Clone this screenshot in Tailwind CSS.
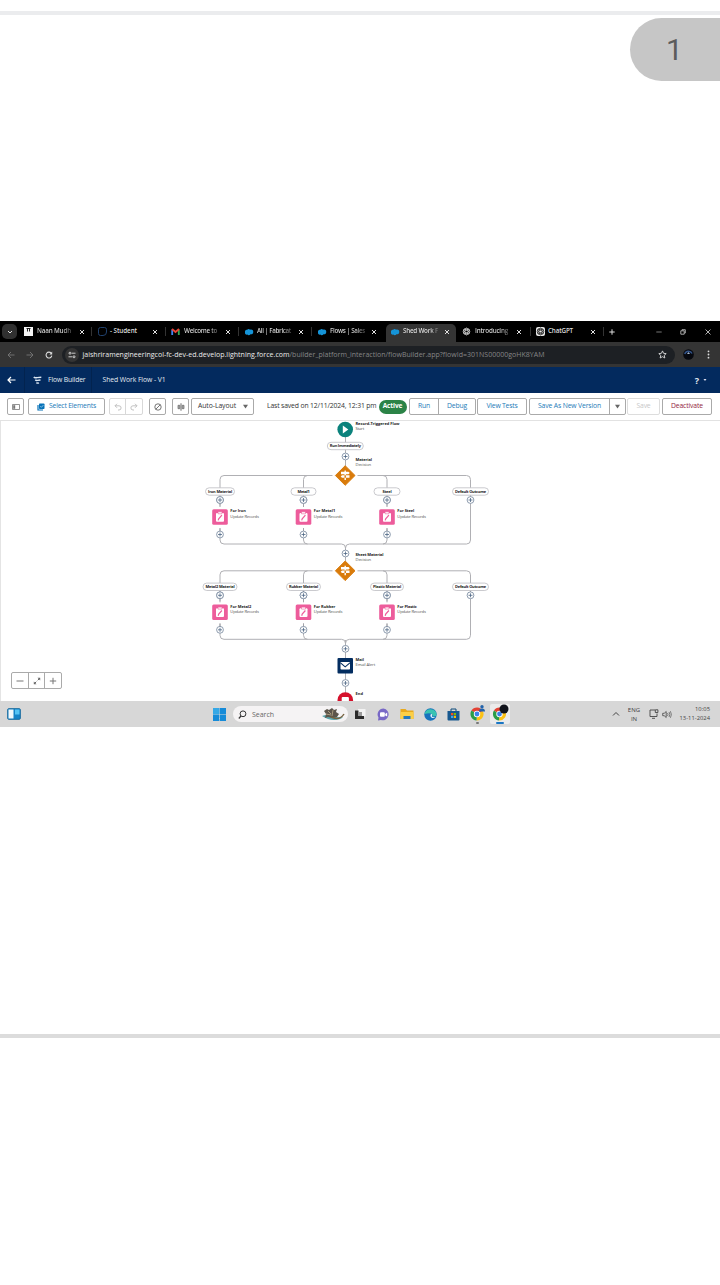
<!DOCTYPE html>
<html lang="en">
<head>
<meta charset="utf-8">
<title>Flow Builder</title>
<script src="https://cdn.jsdelivr.net/npm/@tailwindcss/browser@4"></script>
</head>
<body class="bg-white">
<svg width="0" height="0" class="absolute">
  <defs>
    <symbol id="cloud" viewBox="0 0 10 8"><path fill="#1594d8" d="M1 4.200C.6 2.600 2 1.400 3.200 1.800 4 .8 5.400.900 6 1.700 8 1 9.700 2.500 9.200 4.400 9 6 7.400 6.500 6.500 6.200 5.600 7.500 4 7.400 3.400 6.600 1.800 6.900.7 5.700 1 4.200Z"/></symbol>
    <symbol id="x" viewBox="0 0 6 6"><path stroke="#e0e0e0" stroke-width="1" d="M1 1l4 4M5 1l-4 4"/></symbol>
    <symbol id="gpt" viewBox="0 0 10 10"><g fill="none" stroke="currentColor" stroke-width=".8"><circle cx="5" cy="5" r="3.700"/><ellipse cx="5" cy="5" rx="1.600" ry="3.700"/><ellipse cx="5" cy="5" rx="1.600" ry="3.700" transform="rotate(60 5 5)"/><ellipse cx="5" cy="5" rx="1.600" ry="3.700" transform="rotate(120 5 5)"/></g></symbol>
    <symbol id="chrome" viewBox="0 0 14 14"><path d="M7 7L1.400 3.600A6.500 6.500 0 0 1 12.800 4Z" fill="#e34133"/><path d="M7 7L12.800 4A6.500 6.500 0 0 1 6.500 13.500Z" fill="#fbc116"/><path d="M7 7L6.500 13.500A6.500 6.500 0 0 1 1.400 3.600Z" fill="#2a9d48"/><circle cx="7" cy="7" r="3.200" fill="#fff"/><circle cx="7" cy="7" r="2.400" fill="#3b82e8"/></symbol>
  </defs>
</svg>
<div class="relative flex h-[1285px] w-[720px] flex-col overflow-hidden bg-white font-['Open_Sans','Noto_Sans',sans-serif] leading-none whitespace-nowrap">
  <div class="mt-[11px] h-1 shrink-0 bg-[#ebecee]"></div>
  <div class="mt-[3px] ml-auto flex h-[63px] w-[90px] shrink-0 items-center rounded-l-full bg-[#c6c6c6] pl-[36px] font-[Roboto,sans-serif] text-[30px] text-[#5c5c5c]">1</div>

  <main id="screen" class="mt-[240px] flex h-[406px] shrink-0 flex-col text-[6.500px]">
    <!-- browser tabs -->
    <div class="flex h-[21px] items-center bg-black text-[6.300px] font-semibold text-[#dedede]">
      <div class="ml-[2px] flex h-[15px] w-[15px] items-center justify-center rounded-[5px] bg-[#303030]"><svg class="h-1.5 w-1.5" viewBox="0 0 6 6"><path d="M1 2l2 2 2-2" fill="none" stroke="#ddd"/></svg></div>
      <div class="ml-[2px] flex h-full w-[73px] items-center pl-[5px]"><svg class="h-[9px] w-[9px]" viewBox="0 0 9 9"><path fill="#f5f5f5" d="M0 0h9v9H0z"/><path d="M2.500 1.500h4M3.500 1.500v3M5.500 1.500v3" stroke="#222"/></svg><span class="ml-1 w-[36px] overflow-hidden bg-gradient-to-r from-[#dedede] from-70% to-[#333] bg-clip-text py-1 text-transparent"><span data-w="34">Naan Mudh</span></span><svg class="ml-[6px] h-1.5 w-1.5"><use href="#x"/></svg></div>
      <div class="flex h-full w-[73px] items-center pl-[5px]"><i class="-ml-[1px] mr-[1px] h-[9px] w-px -translate-x-[5px] bg-[#333]"></i><svg class="h-[9px] w-[9px]" viewBox="0 0 9 9"><path d="M2.500.5h4a2 2 0 0 1 2 2v2.500a3.500 3.500 0 0 1-3.500 3.500H2.500a2 2 0 0 1-2-2v-4a2 2 0 0 1 2-2z" fill="#000" stroke="#20416e"/></svg><span class="ml-[3px] w-[37px] py-1"><span data-w="27">- Student</span></span><svg class="ml-[5px] h-1.5 w-1.5"><use href="#x"/></svg></div>
      <div class="flex h-full w-[73px] items-center pl-[5px]"><i class="-ml-[1px] h-[9px] w-px -translate-x-[4px] bg-[#333]"></i><svg class="ml-[1px] h-[9px] w-[9px]" viewBox="0 0 9 9"><path d="M1.200 8V2.500" stroke="#4285f4" stroke-width="1.800"/><path d="M7.800 8V2.500" stroke="#34a853" stroke-width="1.800"/><path d="M1 2l3.500 3L8 2" stroke="#ea4335" stroke-width="1.900" fill="none"/></svg><span class="ml-[4px] w-[36px] overflow-hidden bg-gradient-to-r from-[#dedede] from-70% to-[#333] bg-clip-text py-1 text-transparent"><span data-w="33">Welcome to</span></span><svg class="ml-[5px] h-1.5 w-1.5"><use href="#x"/></svg></div>
      <div class="flex h-full w-[73px] items-center pl-[5px]"><i class="-ml-[1px] h-[9px] w-px -translate-x-[4px] bg-[#333]"></i><svg class="ml-[1px] h-[8px] w-[10px]"><use href="#cloud"/></svg><span class="ml-[3px] w-[36px] overflow-hidden bg-gradient-to-r from-[#dedede] from-70% to-[#333] bg-clip-text py-1 text-transparent"><span data-w="34">All | Fabricat</span></span><svg class="ml-[5px] h-1.5 w-1.5"><use href="#x"/></svg></div>
      <div class="flex h-full w-[73px] items-center pl-[5px]"><i class="-ml-[1px] h-[9px] w-px -translate-x-[4px] bg-[#333]"></i><svg class="ml-[1px] h-[8px] w-[10px]"><use href="#cloud"/></svg><span class="ml-[3px] w-[36px] overflow-hidden bg-gradient-to-r from-[#dedede] from-70% to-[#333] bg-clip-text py-1 text-transparent"><span data-w="35">Flows | Sales</span></span><svg class="ml-[5px] h-1.5 w-1.5"><use href="#x"/></svg></div>
      <div class="ml-[2px] mt-[3px] flex h-[18px] w-[70px] items-center rounded-t-[5px] bg-[#343434] pb-[3px] pl-[4px]"><svg class="h-[8px] w-[10px]"><use href="#cloud"/></svg><span class="ml-[3px] w-[36px] overflow-hidden bg-gradient-to-r from-[#e8e8e8] from-75% to-[#555] bg-clip-text py-1 text-transparent"><span data-w="35">Shed Work F</span></span><svg class="ml-[5px] h-1.5 w-1.5"><use href="#x"/></svg></div>
      <div class="ml-px flex h-full w-[73px] items-center pl-[5px]"><svg class="h-[9px] w-[9px] text-[#ccc]"><use href="#gpt"/></svg><span class="ml-[4px] w-[36px] overflow-hidden bg-gradient-to-r from-[#dedede] from-70% to-[#333] bg-clip-text py-1 text-transparent"><span data-w="33">Introducing</span></span><svg class="ml-[5px] h-1.5 w-1.5"><use href="#x"/></svg></div>
      <div class="flex h-full w-[73px] items-center pl-[5px]"><i class="-ml-[1px] h-[9px] w-px -translate-x-[4px] bg-[#333]"></i><svg class="ml-[1px] h-[9px] w-[9px] rounded-[2px] bg-[#e8e8e8] text-[#333]"><use href="#gpt"/></svg><span class="ml-[3px] w-[37px] py-1"><span data-w="25">ChatGPT</span></span><svg class="ml-[5px] h-1.5 w-1.5"><use href="#x"/></svg></div>
      <i class="h-[9px] w-px bg-[#333]"></i>
      <svg class="ml-[5px] h-[6px] w-[6px]" viewBox="0 0 6 6"><path d="M3 .3v5.400M.3 3h5.400" stroke="#ddd"/></svg>
      <svg class="ml-[41px] h-[6px] w-[6px]" viewBox="0 0 6 6"><path d="M.3 3h5.400" stroke="#aaa" stroke-width=".7"/></svg>
      <svg class="ml-[18px] h-[6px] w-[6px]" viewBox="0 0 6 6"><path d="M.8 1.800h3.400v3.400H.8zM2 1.500V.7h3.300V4H4.400" fill="none" stroke="#ccc" stroke-width=".8"/></svg>
      <svg class="ml-[19px] h-[6px] w-[6px]" viewBox="0 0 6 6"><path d="M.5.500l5 5M5.500.500l-5 5" stroke="#ddd" stroke-width=".8"/></svg>
    </div>
    <!-- address bar -->
    <div class="flex h-[25px] items-center bg-[#343434]">
      <svg class="ml-[7px] h-2 w-2" viewBox="0 0 8 8"><path d="M7.500 4H1M4 1L1 4l3 3" fill="none" stroke="#777" stroke-width=".9"/></svg>
      <svg class="ml-[11px] h-2 w-2" viewBox="0 0 8 8"><path d="M.5 4H7M4 1l3 3-3 3" fill="none" stroke="#777" stroke-width=".9"/></svg>
      <svg class="ml-[10.500px] h-2 w-2" viewBox="0 0 8 8"><path d="M6.800 4.700A2.900 2.900 0 1 1 6.200 2.200" fill="none" stroke="#ddd" stroke-width="1.100"/><path d="M7.200.5v3H4.400z" fill="#ddd"/></svg>
      <div class="ml-[9px] flex h-[18px] w-[613px] items-center rounded-full bg-[#1d2024] pl-[3px]">
        <div class="flex h-[14px] w-[14px] items-center justify-center rounded-full bg-[#343434]"><svg class="h-2 w-2" viewBox="0 0 8 8"><g fill="none" stroke="#ddd" stroke-width=".9"><circle cx="2" cy="2.200" r="1"/><path d="M3.800 2.200H7.500M.5 5.800H4.200"/><circle cx="6" cy="5.800" r="1"/></g></svg></div>
        <span class="ml-[4px] text-[7px] font-medium text-[#ececec]" data-w="207">jaishriramengineeringcol-fc-dev-ed.develop.lightning.force.com</span><span class="text-[7px] text-[#868686]" data-w="255">/builder_platform_interaction/flowBuilder.app?flowId=301NS00000goHK8YAM</span>
        <svg class="ml-auto mr-[8px] h-[9px] w-[9px]" viewBox="0 0 10 10"><path d="M5 1l1.200 2.700 2.900.3-2.200 2 .7 2.900L5 7.400 2.400 8.900l.7-2.900L.9 4l2.900-.3z" fill="none" stroke="#ddd"/></svg>
      </div>
      <svg class="ml-[8px] h-[11px] w-[11px]" viewBox="0 0 11 11"><circle cx="5.500" cy="5.500" r="5.300" fill="#06080f"/><path d="M1.800 5A3.800 3.800 0 0 1 9 4.500" fill="none" stroke="#315389" stroke-width="1.500"/><path d="M4 5l1.500-2L7 5z" fill="#a7b8cc"/></svg>
      <svg class="ml-[13px] h-[9px] w-[3px]" viewBox="0 0 3 9"><g fill="#ddd"><circle cx="1.500" cy="1.300" r=".9"/><circle cx="1.500" cy="4.500" r=".9"/><circle cx="1.500" cy="7.700" r=".9"/></g></svg>
    </div>
    <!-- builder header -->
    <header class="flex h-[26px] items-center bg-[#032a5e] text-[6.800px] font-medium text-[#e4eaf2]">
      <div class="flex h-full w-[25px] items-center border-r border-[#02234f] pl-[7px]"><svg class="h-2 w-[9px]" viewBox="0 0 9 8"><path d="M8.500 4H1.200M4 1L1 4l3 3" fill="none" stroke="#fff" stroke-width="1.200"/></svg></div>
      <div class="flex h-full w-[67px] items-center border-r border-[#02234f] pl-[8px]"><svg class="h-[9px] w-[9px]" viewBox="0 0 9 9"><path d="M.8 1Q1.500 2 3 1.700L8.300 1.200M2.300 3.800Q3 4.700 4.500 4.400L7.500 4M3.500 6.500Q4.200 7.500 6 6.900" fill="none" stroke="#dce7f3" stroke-width="1.400"/></svg><span class="ml-[6px]" data-w="37.500">Flow Builder</span></div>
      <span class="ml-[10.500px]" data-w="63">Shed Work Flow - V1</span>
      <span class="ml-auto text-[9px] font-bold">?</span><svg class="mr-[13px] ml-[4px] h-1 w-1" viewBox="0 0 4 4"><path d="M.5 1h3L2 3z" fill="#dde"/></svg>
    </header>
    <!-- toolbar -->
    <div class="flex h-[28px] items-center border-b border-[#e2e2e2] bg-white text-[6.800px] text-[#1c7bb8]">
      <div class="ml-[7px] flex h-[17px] w-[17px] shrink-0 items-center justify-center rounded-[2px] border border-[#aaa]"><svg class="h-[6px] w-[8px]" viewBox="0 0 8 6"><path d="M.5.500h7v5h-7z" fill="none" stroke="#777" stroke-width=".8"/><path d="M1.200 1.200h2v3.600h-2z" fill="#777"/></svg></div>
      <div class="ml-[4px] flex h-[17px] w-[77px] shrink-0 items-center rounded-[2px] border border-[#aaa] pl-[8px]"><svg class="h-[8px] w-[8px]" viewBox="0 0 8 8"><rect x="2" y=".5" width="5.500" height="5.500" rx=".8" fill="#0872b8"/><path d="M1 2v5h5" stroke="#0872b8" stroke-width="1.200" fill="none"/><path d="M3.300 3.200l1.100 1.100 2-2.200" stroke="#bfe3f7" stroke-width=".7" fill="none"/></svg><span class="ml-[4px]" data-w="47">Select Elements</span></div>
      <div class="ml-[4px] flex h-[17px] w-[34px] shrink-0 rounded-[2px] border border-[#d8d8d8]"><div class="flex w-[16px] items-center justify-center border-r border-[#d8d8d8]"><svg class="h-[8px] w-[8px]" viewBox="0 0 8 8"><path d="M3 .8L1 2.800l2 2M1 2.800h4a2 2 0 0 1 0 4.200H4" fill="none" stroke="#bbb" stroke-width=".9"/></svg></div><div class="flex flex-1 items-center justify-center"><svg class="h-[8px] w-[8px]" viewBox="0 0 8 8"><path d="M5 .8l2 2-2 2M7 2.800H3a2 2 0 0 0 0 4.200h1" fill="none" stroke="#bbb" stroke-width=".9"/></svg></div></div>
      <div class="ml-[6px] flex h-[17px] w-[17px] shrink-0 items-center justify-center rounded-[2px] border border-[#aaa]"><svg class="h-[8px] w-[8px]" viewBox="0 0 8 8"><circle cx="4" cy="4" r="3.200" fill="none" stroke="#666" stroke-width=".9"/><path d="M1.800 6.200l4.400-4.400" stroke="#666" stroke-width=".9"/></svg></div>
      <div class="ml-[6px] flex h-[17px] w-[17px] shrink-0 items-center justify-center rounded-[2px] border border-[#aaa]"><svg class="h-[8px] w-[8px]" viewBox="0 0 8 8"><path d="M4 .3v7.400" stroke="#555" stroke-width=".9"/><path d="M1 2.300h1.800v3.400H1zM5.200 2.300H7v3.400H5.200z" fill="#aaa" stroke="#666" stroke-width=".7"/></svg></div>
      <div class="ml-[2px] flex h-[17px] w-[63px] shrink-0 items-center rounded-[2px] border border-[#aaa] pl-[6px] text-[#333]"><span data-w="38">Auto-Layout</span><svg class="ml-[7px] h-[5px] w-[5px]" viewBox="0 0 5 5"><path d="M0 .8h5L2.500 4.500z" fill="#666"/></svg></div>
      <span class="ml-[13px] w-[110px] shrink-0 text-[#333]"><span data-w="109.500">Last saved on 12/11/2024, 12:31 pm</span></span>
      <div class="ml-[1.500px] flex h-[14px] w-[28px] shrink-0 items-center justify-center rounded-full bg-[#2b8347] text-[6.500px] font-bold text-white"><span data-w="19.500">Active</span></div>
      <div class="ml-[2.500px] flex h-[17px] w-[67px] shrink-0 rounded-[2px] border border-[#aaa]"><div class="flex w-[29px] items-center justify-center border-r border-[#aaa]"><span data-w="12">Run</span></div><div class="flex flex-1 items-center justify-center"><span data-w="20">Debug</span></div></div>
      <div class="ml-[1px] flex h-[17px] w-[50px] shrink-0 items-center justify-center rounded-[2px] border border-[#aaa]"><span data-w="31">View Tests</span></div>
      <div class="ml-[2px] flex h-[17px] w-[97px] shrink-0 rounded-[2px] border border-[#aaa]"><div class="flex w-[80px] items-center justify-center border-r border-[#aaa]"><span data-w="63">Save As New Version</span></div><div class="flex flex-1 items-center justify-center"><svg class="h-[5px] w-[5px]" viewBox="0 0 5 5"><path d="M0 .8h5L2.500 4.500z" fill="#666"/></svg></div></div>
      <div class="ml-[1px] flex h-[17px] w-[33px] shrink-0 items-center justify-center rounded-[2px] border border-[#ddd] text-[#c8c8c8]"><span data-w="14">Save</span></div>
      <div class="ml-[2px] flex h-[17px] w-[50px] shrink-0 items-center justify-center rounded-[2px] border border-[#aaa] text-[#93243c]"><span data-w="32">Deactivate</span></div>
    </div>
    <!-- flow canvas -->
    <div id="canvas" class="relative h-[280px] overflow-hidden border-l border-[#e4e4e4] bg-white">
      <svg id="flow" class="absolute top-0 -left-px h-[280px] w-[720px]" viewBox="0 421 720 280"></svg>
      <div class="absolute top-[251px] left-[10px] flex h-[17px] w-[51px] items-stretch rounded-[2px] border border-[#aaa]">
        <div class="flex w-[17px] items-center justify-center border-r border-[#aaa]"><svg class="h-2 w-2" viewBox="0 0 8 8"><path d="M.5 4h7" stroke="#777"/></svg></div>
        <div class="flex w-[16px] items-center justify-center border-r border-[#aaa]"><svg class="h-2 w-2" viewBox="0 0 8 8"><path d="M4.500.8h2.700v2.700zM.8 4.500v2.700h2.700z" fill="#666"/><path d="M6.500 1.500L4.700 3.300M3.300 4.700L1.500 6.500" stroke="#666"/></svg></div>
        <div class="flex flex-1 items-center justify-center"><svg class="h-2 w-2" viewBox="0 0 8 8"><path d="M.8 4h6.400M4 .8v6.400" stroke="#777"/></svg></div>
      </div>
    </div>
    <!-- taskbar -->
    <div class="flex h-[26px] items-center bg-[#d7d7d7] text-[#444]">
      <svg class="ml-[7px] h-[12px] w-[14px]" viewBox="0 0 14 12"><rect x=".7" y=".7" width="12.600" height="10.600" rx="1" fill="#1684c8" stroke="#176a9e"/><path d="M1.500 1.500h5v9h-5z" fill="#f3f8fb"/><path d="M8 1.500h4.500v5H8z" fill="#55c3f4"/></svg>
      <svg class="ml-[192px] h-[13px] w-[13px]" viewBox="0 0 13 13"><path d="M0 0h6.200v6.200H0zM6.800 0H13v6.200H6.800zM0 6.800h6.200V13H0zM6.800 6.800H13V13H6.800z" fill="#168bd8"/><path d="M0 0h6.200v6.200H0z" fill="#35a8e6"/></svg>
      <div class="ml-[7px] flex h-[16px] w-[115px] items-center rounded-full bg-[#f5f3f4] pl-[5px] text-[7px] text-[#666]"><svg class="h-[9px] w-[9px]" viewBox="0 0 9 9"><circle cx="5" cy="3.800" r="2.900" fill="none" stroke="#333"/><path d="M3 6L.8 8.500" stroke="#333" stroke-width="1.200"/></svg><span class="ml-[5px]" data-w="22">Search</span>
        <svg class="ml-auto mr-[3px] h-[14px] w-[24px]" viewBox="0 0 24 14"><path d="M1 9q5-2 10 0t11 1q-3 3-9 3T1 9z" fill="#5aa5ad"/><path d="M3 4l3-2 2 1 3-2 2 2 3-1-1 3 3 2-2 3-5 1-4-1-3 1 1-4z" fill="#5c554b"/><path d="M7 4l3 3M12 3l-1 6M5 7l5 1" stroke="#a99b7e"/><path d="M10 10q9 4 13-3" fill="none" stroke="#76613f" stroke-width="1.500"/></svg></div>
      <svg class="ml-[6px] h-[12px] w-[12px]" viewBox="0 0 12 12"><path d="M4 1h7.500v7.500H4z" fill="#f3f3f3"/><path d="M1 2.500h3.500V8H10v3H1z" fill="#292929"/><path d="M4.500 4h3.500v4H4.500z" fill="#999"/></svg>
      <svg class="ml-[11px] h-[13px] w-[13px]" viewBox="0 0 13 13"><path d="M6.500.5A5.900 5.900 0 1 1 4 12L1 12.500 1.500 9.500A5.900 5.900 0 0 1 6.500.5z" fill="#7868c6"/><rect x="3" y="4.300" width="4.800" height="4.500" rx="1" fill="#fff"/><path d="M8.200 6l2-1.400v4L8.200 7.400z" fill="#fff"/></svg>
      <svg class="ml-[10px] h-[12px] w-[14px]" viewBox="0 0 14 12"><path d="M.5 1h5l1.500 1.500h6.500V11H.5z" fill="#e9a91c"/><path d="M.5 4h13v7H.5z" fill="#fccf46"/><path d="M3.500 8h7v3h-7z" fill="#2379bd"/></svg>
      <svg class="ml-[10px] h-[13px] w-[13px]" viewBox="0 0 13 13"><circle cx="6.500" cy="6.500" r="6.200" fill="#1772bd"/><path d="M.5 6A6.200 6.200 0 0 1 12.700 6.500Q12.300 9 9 8.500 8.500 3.500.5 6z" fill="#39c3b2"/><path d="M7 6q-1.500 2 .8 3.800 2 .6 3.500 0-1 0-2.300-.8Q7 8.500 8.300 7 8.300 6 7 6z" fill="#e9f7fc"/></svg>
      <svg class="ml-[10px] h-[13px] w-[13px]" viewBox="0 0 13 13"><path d="M4 3V1h5v2" fill="none" stroke="#0d4a7b"/><path d="M.5 3h12v8.500a1 1 0 0 1-1 1h-10a1 1 0 0 1-1-1z" fill="#17588f"/><path d="M4 5h2.200v2.200H4z" fill="#f25022"/><path d="M6.800 5H9v2.200H6.800z" fill="#7fba00"/><path d="M4 7.800h2.200V10H4z" fill="#35a8ef"/><path d="M6.800 7.800H9V10H6.800z" fill="#ffb900"/></svg>
      <div class="ml-[9px] flex h-[20px] w-[17px] flex-col items-center"><svg class="h-[17px] w-[17px]" viewBox="0 0 17 17"><use href="#chrome" x="1" y="3" width="14" height="14"/><circle cx="13" cy="2.800" r="1.700" fill="#2262aa"/><path d="M10 7.500q0-3 3-3t3 3z" fill="#2262aa"/></svg><i class="mt-px h-[1.500px] w-[3px] rounded bg-[#777]"></i></div>
      <div class="ml-[4px] flex h-[20px] w-[20px] flex-col items-center rounded-[2px] bg-[#ebebeb]"><svg class="h-[17px] w-[18px]" viewBox="0 0 18 17"><use href="#chrome" x="1.500" y="3" width="14" height="14"/><circle cx="13" cy="5" r="4.500" fill="#10131b"/></svg><i class="mt-px h-[1.500px] w-[8px] rounded bg-[#1a76c4]"></i></div>
      <svg class="ml-[102px] h-[6px] w-[8px]" viewBox="0 0 8 6"><path d="M1 4.500l3-3 3 3" fill="none" stroke="#444"/></svg>
      <div class="ml-[7px] flex w-[14px] flex-col items-center gap-[3px] text-[6px]"><span data-w="12.500">ENG</span><span data-w="6">IN</span></div>
      <svg class="ml-[8px] h-[10px] w-[10px]" viewBox="0 0 10 10"><path d="M6 1H1v6.500h7V4.500M3 9.300h3" fill="none" stroke="#444" stroke-width=".9"/><path d="M6.300.8h2.600v2.700H6.300z" fill="none" stroke="#444" stroke-width=".9"/></svg>
      <svg class="ml-[3px] h-[9px] w-[10px]" viewBox="0 0 10 9"><path d="M.7 3.300h1.500L4.200 1.500v6L2.200 5.700H.7z" fill="none" stroke="#444" stroke-width=".8"/><path d="M5.500 3q1 1.500 0 3M7 2q1.700 2.500 0 5M8.400 1.200q2 3.300 0 6.600" fill="none" stroke="#555" stroke-width=".7"/></svg>
      <div class="mr-[10px] ml-auto flex flex-col items-end gap-[3px] text-[5.800px]"><span data-w="15">10:05</span><span data-w="30.500">13-11-2024</span></div>
    </div>
  </main>
  <div class="mt-[307px] h-1 shrink-0 bg-[#dcdcdc]"></div>
</div>
<script>
  const canvas = document.getElementById('canvas'), svg = document.getElementById('flow');
  let art = '';
  const line = d => art += `<path d="${d}" fill="none" stroke="#b0b0b4" stroke-width="1"/>`;
  const plus = (x, y) => art += `<circle cx="${x}" cy="${y}" r="3.400" fill="#fff" stroke="#72849a" stroke-width=".8"/><path d="M${x-2} ${y}h4M${x} ${y-2}v4" stroke="#4d6684" stroke-width=".8"/>`;
  // labels: x is the left edge, y the vertical centre
  const label = (x, y, text, w, bold) => {
    const e = document.createElement('span');
    e.className = bold ? 'absolute -translate-y-1/2 text-[4px] font-bold text-[#222]' : 'absolute -translate-y-1/2 text-[4.200px] text-[#555]';
    e.style.left = (x - 1) + 'px'; e.style.top = (y - 421) + 'px';
    e.dataset.w = w; e.textContent = text; canvas.append(e);
  };
  const pill = (x, y, text, w, tw) => {
    art += `<rect x="${x-w/2}" y="${y-3.700}" width="${w}" height="7.400" rx="3.700" fill="#fff" stroke="#bdbdc2" stroke-width=".8"/>`;
    label(x - tw/2, y, text, tw, true);
  };
  const decision = y => art += `<path d="M345.200 ${y-9.800}l9.800 9.800-9.800 9.800-9.800-9.800z" fill="#d97b0b" stroke="#d97b0b" stroke-width="1" stroke-linejoin="round"/><path d="M341 ${y-3.800}h7.500l1.300 1.300-1.300 1.300H341zM349.500 ${y-.3}H342l-1.300 1.300 1.300 1.300h7.500zM344.500 ${y-5}h1.400v9.500h-1.400z" fill="#fff"/>`;
  const X = [220, 303.5, 387, 470.5];
  line('M345.500 430V475');
  line('M345.500 640V698');
  function level(y, pills, names) {
    line(`M332.500 ${y}H224Q220 ${y} 220 ${y+4}V${y+64.500}Q220 ${y+68.500} 224 ${y+68.500}H341.500Q345.500 ${y+68.500} 345.500 ${y+72.500}V${y+86}`);
    line(`M307.500 ${y}Q303.500 ${y} 303.500 ${y+4}V${y+64.500}Q303.500 ${y+68.500} 307.500 ${y+68.500}`);
    line(`M357.500 ${y}H466.500Q470.500 ${y} 470.500 ${y+4}V${y+64.500}Q470.500 ${y+68.500} 466.500 ${y+68.500}H349.500Q345.500 ${y+68.500} 345.500 ${y+72.500}`);
    line(`M383 ${y}Q387 ${y} 387 ${y+4}V${y+64.500}Q387 ${y+68.500} 383 ${y+68.500}`);
    pills.forEach((p, i) => { pill(X[i], y + 16, p[0], p[1], p[2]); plus(X[i], y + 24.500); });
    names.forEach((n, i) => {
      const x = X[i], c = y + 41.500;
      art += `<path d="M${x-5} ${c-11.500}h10v23h-10z" fill="#fff"/><path d="M${x} ${c-14}v4M${x} ${c+11}v5" stroke="#a3a3a8"/><rect x="${x-7.800}" y="${c-7.800}" width="15.600" height="15.600" rx="1.500" fill="#ed5c9b"/><rect x="${x-4}" y="${c-4}" width="8" height="8.800" rx="1" fill="#fff"/><path d="M${x-2} ${c-5.200}h4v2h-4z" fill="#fff" stroke="#ed5c9b" stroke-width=".6"/><path d="M${x-1.800} ${c+3.400}l.5-1.600 3.200-3.600" fill="none" stroke="#ed5c9b" stroke-width="1.200"/>`;
      plus(x, y + 24.500); plus(x, y + 59);
      label(x + 10.300, c - 5.800, n[0], n[1], true);
      label(x + 10.300, c - .3, 'Update Records', 28.500);
    });
    plus(345.500, y + 78);
  }
  level(475.5, [['Iron Material', 29, 24], ['Metal1', 25, 12], ['Steel', 26, 9], ['Default Outcome', 36, 31]], [['For Iron', 15.5], ['For Metal1', 21.5], ['For Steel', 17]]);
  level(570.8, [['Metal2 Material', 34, 29], ['Rubber Material', 34, 29], ['Plastic Material', 33, 28], ['Default Outcome', 36, 31]], [['For Metal2', 21], ['For Rubber', 21.5], ['For Plastic', 19.5]]);
  decision(475.5); decision(570.8);
  pill(345.3, 446, 'Run Immediately', 36, 31); plus(345.5, 456.5); plus(345.5, 683);
  art += '<circle cx="345.200" cy="429.500" r="7.800" fill="#0b827c"/><path d="M342.800 425.500v8l5.500-4z" fill="#fff"/>';
  art += '<rect x="337.500" y="658" width="15.500" height="15.500" rx="1" fill="#032d60"/><rect x="340.500" y="662" width="9.500" height="7.500" rx=".8" fill="#fff"/><path d="M340.500 662.800l4.700 4 4.700-4" fill="none" stroke="#032d60" stroke-width="1.100"/>';
  art += '<circle cx="345.300" cy="700" r="7.800" fill="#d5112c"/><rect x="341.700" y="697" width="7.200" height="7" rx="1" fill="#fff"/>';
  svg.innerHTML = art;
  label(355.5, 423.5, 'Record-Triggered Flow', 44, true); label(355.5, 428.7, 'Start', 8.5);
  label(355.5, 459.8, 'Material', 16.5, true); label(355.5, 465, 'Decision', 15.5);
  label(355.5, 555, 'Sheet Material', 28, true); label(355.5, 560.3, 'Decision', 15.5);
  label(355.5, 659.8, 'Mail', 8.5, true); label(355.5, 665, 'Email Alert', 19.5);
  label(355.5, 694.3, 'End', 7.5, true);
  // track every label to its design width, once the styles are in force
  function fit() {
    if (getComputedStyle(canvas).position !== 'relative') return;
    document.querySelectorAll('[data-w]').forEach(e => {
      e.style.letterSpacing = '0px';
      const r = document.createRange(); r.selectNodeContents(e);
      e.style.letterSpacing = (e.dataset.w - r.getBoundingClientRect().width) / e.textContent.length + 'px';
    });
  }
  fit();
  addEventListener('load', fit);
  document.fonts.ready.then(fit);
  const watch = new ResizeObserver(fit);
  watch.observe(document.getElementById('screen'));
  watch.observe(canvas);
  let frames = 0;
  (function settle() { fit(); if (++frames < 20) requestAnimationFrame(settle); })();
</script>
</body>
</html>
